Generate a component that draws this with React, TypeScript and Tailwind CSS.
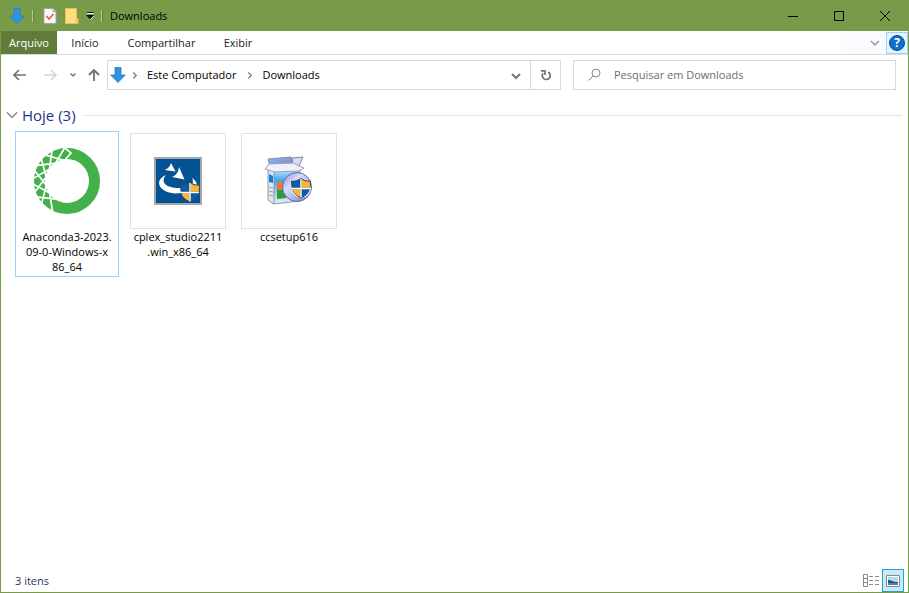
import React from "react";

function Arrow({ size }: { size: number }) {
  return (
    <svg width={size} height={size} viewBox="0 0 16 16" aria-hidden="true">
      <path d="M5 0.5h6v7.5h4.3L8 15.6 0.7 8H5z" fill="#2f93e2" stroke="#2a7fc4" strokeWidth="0.8" />
    </svg>
  );
}

function Shield({ x, y }: { x: number; y: number }) {
  return (
    <g transform={`translate(${x} ${y})`}>
      <path d="M10 0C7 2 3.500 2.800 0 2.800c0 8.500 2 14 10 17.700 8-3.700 10-9.200 10-17.700-3.500 0-7-.8-10-2.800z" fill="#3d474d" />
      <path d="M9.300 1.500v8.300H1.300C1 7.800 1 6 1 3.700c3 0 6-.7 8.300-2.200z" fill="#0a5cab" />
      <path d="M10.700 1.500c2.300 1.500 5.300 2.200 8.300 2.200 0 2.300 0 4.100-.3 6.100h-8z" fill="#fcb336" />
      <path d="M1.500 11.200h7.800v7.900c-4.500-2-6.900-4.500-7.800-7.900z" fill="#fcb336" />
      <path d="M10.700 11.200h7.800c-.9 3.400-3.300 5.900-7.800 7.900z" fill="#0a5cab" />
      <path d="M10 1v18.500M1 10.500h18" stroke="#fff" strokeWidth="1.400" />
    </g>
  );
}

function ringPoint(radius: number, degrees: number) {
  const angle = (degrees * Math.PI) / 180;
  return `${(34 + radius * Math.cos(angle)).toFixed(1)} ${(34 - radius * Math.sin(angle)).toFixed(1)}`;
}

const scaleStep = 23;
const lattice = [0, 1, 2, 3, 4, 5]
  .map((i) => {
    const from = 100 + i * scaleStep;
    const to = from + scaleStep + 8;
    return `M${ringPoint(35, from - 8)}L${ringPoint(20, to)}M${ringPoint(20, from - 8)}L${ringPoint(35, to)}`;
  })
  .join("");

function AnacondaIcon() {
  return (
    <svg width="68" height="68" viewBox="0 0 68 68" aria-hidden="true">
      <circle cx="34" cy="34" r="27.500" fill="none" stroke="#43b049" strokeWidth="11" />
      <path d={lattice} stroke="#fff" strokeWidth="1.700" fill="none" />
      <path d="M31 0l7 6-7 8" stroke="#fff" strokeWidth="1.700" fill="none" />
    </svg>
  );
}

function StudioIcon() {
  return (
    <svg width="48" height="48" viewBox="0 0 48 48" aria-hidden="true">
      <path d="M1 1h46v46H1z" fill="#035294" stroke="#a3a7ab" strokeWidth="2" />
      <path d="M17 6l4.500 8.500L10.500 13c3-1 5.500-3.500 6.500-7zM25 10l5.500 12.500L18 20c4-1.500 6.500-5 7-10z" fill="#fff" />
      <path d="M12 18C0 23 4 35 21 36.500l7-.5v-5C14 32 5 26 12 18zM38 21c6 4 6 8 2 12l-3-5c3-2 2-5 1-7z" fill="#fff" />
      <Shield x={26} y={25} />
    </svg>
  );
}

function SetupIcon() {
  return (
    <svg width="50" height="50" viewBox="0 0 50 50" aria-hidden="true">
      <defs>
        <linearGradient id="front" x1="0" y1="0" x2="0" y2="1">
          <stop offset="0" stopColor="#d6eefc" />
          <stop offset="0.350" stopColor="#3fa6f2" />
          <stop offset="1" stopColor="#e3f1fb" />
        </linearGradient>
        <linearGradient id="flap" x1="0" y1="0" x2="1" y2="1">
          <stop offset="0" stopColor="#86b4f2" />
          <stop offset="1" stopColor="#7f82cc" />
        </linearGradient>
        <linearGradient id="disc" x1="0" y1="0" x2="1" y2="1">
          <stop offset="0" stopColor="#7f84d8" />
          <stop offset="0.350" stopColor="#d9dbff" />
          <stop offset="1" stopColor="#7378c4" />
        </linearGradient>
      </defs>
      <path d="M4 3l23-2 2 9-22 4z" fill="url(#flap)" stroke="#858ba8" />
      <path d="M28 2l11-1-4 9-6-1z" fill="#d9dcee" stroke="#7d849c" />
      <path d="M9 14l27-2v33l-27 3z" fill="url(#front)" stroke="#8d99a6" />
      <path d="M4 11l6 4v33l-6-4z" fill="#e2e5ec" stroke="#8d99a6" />
      <path d="M1 13l4-5 24-1 11 5-5 3-24 1z" fill="#eef0fa" stroke="#9ba1b8" />
      <path d="M5 18l4 2v7l-4-1z" fill="#0c83d9" />
      <path d="M5 31l4 1M5 35l4 1M5 39l4 1" stroke="#9ca5b0" />
      <path d="M13 26l9-1v8l-9 1z" fill="#ef7735" />
      <path d="M13 34l9-1v9l-9 1z" fill="#2f9c2f" />
      <circle cx="33" cy="31" r="14.500" fill="url(#disc)" stroke="#6369a0" />
      <circle cx="37" cy="32" r="10" fill="#eceefb" />
      <Shield x={27} y={22} />
    </svg>
  );
}

const files = [
  { name: ["Anaconda3-2023.", "09-0-Windows-x", "86_64"], icon: <AnacondaIcon />, selected: true },
  { name: ["cplex_studio2211", ".win_x86_64"], icon: <StudioIcon />, selected: false },
  { name: ["ccsetup616"], icon: <SetupIcon />, selected: false },
];

function FileTile({ name, icon, selected }: (typeof files)[number]) {
  return (
    <button
      type="button"
      className={`flex w-[104px] flex-col items-center border pt-px pb-0.5 text-[11px] leading-[15px] ${selected ? "border-[#99d1ff]" : "border-transparent"}`}
    >
      <span className={`flex size-24 items-center justify-center border ${selected ? "border-transparent" : "border-[#e1e1e1]"}`}>
        {icon}
      </span>
      {name.map((line) => (
        <span key={line} className="block whitespace-nowrap">{line}</span>
      ))}
    </button>
  );
}

function Chevron({ d, size, color = "#777" }: { d: string; size: number; color?: string }) {
  return (
    <svg width={size} height={size} viewBox="0 0 12 12" fill="none" stroke={color} strokeWidth="1.500" aria-hidden="true">
      <path d={d} />
    </svg>
  );
}

export default function App() {
  return (
    <div className="flex min-h-screen flex-col border border-[#779b49] bg-white font-['Open_Sans','Noto_Sans',sans-serif] text-[11px] leading-4 text-black">
      <header className="flex h-[30px] items-center bg-[#779b49] pl-2">
        <Arrow size={16} />
        <span className="ml-[7px] h-3 w-0.5 border-r border-[#5f7c3a] bg-[#c0cfab]" />
        <button type="button" aria-label="Propriedades" className="ml-[9px]">
          <svg width="14" height="16" viewBox="0 0 14 16" fill="none">
            <path d="M1 .5h9l3 3v12H1z" fill="#f8f8fa" stroke="#a5a1ad" />
            <path d="M10 .5v3h3" stroke="#a5a1ad" />
            <path d="M3.500 8l2.500 3 4.500-5" stroke="#ec5d2c" strokeWidth="1.600" />
          </svg>
        </button>
        <button type="button" aria-label="Nova pasta" className="ml-2">
          <svg width="14" height="16" viewBox="0 0 14 16">
            <path d="M.5.5h11v10h1.500v5H.5z" fill="#ffdf80" stroke="#e9bd52" />
            <path d="M11.500 10v5" stroke="#e9bd52" />
          </svg>
        </button>
        <button type="button" aria-label="Personalizar" className="ml-[7px]">
          <svg width="8" height="8" viewBox="0 0 8 8">
            <path d="M1 .5h7" stroke="#111" />
            <path d="M1 1.500h7" stroke="#fff" />
            <path d="M0 3h8L4 7.500z" fill="#111" />
            <path d="M4 8l4-4" stroke="#fff" strokeWidth=".8" />
          </svg>
        </button>
        <span className="mx-[7px] h-3 w-0.5 border-r border-[#5f7c3a] bg-[#c0cfab]" />
        <h1>Downloads</h1>
        <div className="ml-auto flex h-full">
          <button type="button" aria-label="Minimizar" className="flex w-[46px] items-center justify-center">
            <svg width="10" height="10" stroke="#000"><path d="M0 5.500h10" /></svg>
          </button>
          <button type="button" aria-label="Maximizar" className="flex w-[46px] items-center justify-center">
            <svg width="10" height="10" fill="none" stroke="#000"><path d="M.5.5h9v9h-9z" /></svg>
          </button>
          <button type="button" aria-label="Fechar" className="flex w-[46px] items-center justify-center">
            <svg width="10" height="10" stroke="#000"><path d="M0 0l10 10M10 0L0 10" /></svg>
          </button>
        </div>
      </header>

      <nav className="flex h-6 items-stretch border-b border-[#dadbdc] text-[#222]">
        <button type="button" className="w-14 bg-[#5f7c3a] text-white">Arquivo</button>
        <button type="button" className="w-14">Início</button>
        <button type="button" className="w-[97px]">Compartilhar</button>
        <button type="button" className="w-14">Exibir</button>
        <div className="ml-auto flex items-center gap-[5px] bg-[#fafbfe] pl-7">
          <button type="button" aria-label="Expandir faixa"><Chevron d="M2 4l4 4 4-4" size={12} color="#999" /></button>
          <button type="button" aria-label="Ajuda" className="flex size-[22px] items-center justify-center border border-[#99d1ff] bg-[#e8f3fd]">
            <span className="flex size-4 items-center justify-center rounded-full border border-[#0a4e9e] bg-[#0d6fca] text-xs font-bold text-white">?</span>
          </button>
        </div>
      </nav>

      <div className="flex h-10 items-center px-3">
        <button type="button" aria-label="Voltar">
          <svg width="14" height="12" viewBox="0 0 14 12" fill="none" stroke="#707070" strokeWidth="1.600"><path d="M13 6H1.500M6 1L1 6l5 5" /></svg>
        </button>
        <button type="button" aria-label="Avançar" className="ml-4">
          <svg width="14" height="12" viewBox="0 0 14 12" fill="none" stroke="#d5d5d5" strokeWidth="1.600"><path d="M1 6h11.500M8 1l5 5-5 5" /></svg>
        </button>
        <button type="button" aria-label="Locais recentes" className="ml-3">
          <svg width="8" height="8" viewBox="0 0 8 8" fill="none" stroke="#777" strokeWidth="1.500"><path d="M1.500 2.500L4 5l2.500-2.500" /></svg>
        </button>
        <button type="button" aria-label="Acima" className="ml-[11px]">
          <svg width="12" height="14" viewBox="0 0 12 14" fill="none" stroke="#707070" strokeWidth="1.800"><path d="M6 13V2M1 7l5-5 5 5" /></svg>
        </button>
        <div className="ml-[7px] flex h-[30px] flex-1 items-center border border-[#d9d9d9] pl-0.5">
          <Arrow size={16} />
          <span className="ml-1"><Chevron d="M4 3l3.500 3.500L4 10" size={10} /></span>
          <a href="#computador" className="ml-[7px]">Este Computador</a>
          <span className="ml-[9px]"><Chevron d="M4 3l3.500 3.500L4 10" size={10} /></span>
          <a href="#downloads" className="ml-[7px]">Downloads</a>
          <button type="button" aria-label="Locais anteriores" className="ml-auto flex w-[29px] justify-center">
            <svg width="12" height="12" viewBox="0 0 12 12" fill="none" stroke="#777" strokeWidth="2"><path d="M2 5l4 4 4-4" /></svg>
          </button>
          <button type="button" aria-label="Atualizar" className="flex h-full w-[30px] items-center justify-center border-l border-[#d9d9d9]">
            <svg width="12" height="12" viewBox="0 0 12 12" fill="none" stroke="#707070" strokeWidth="1.700"><path d="M8.200 3A4 4 0 113 4.200M1 1.800h4V6" /></svg>
          </button>
        </div>
        <label className="ml-3 flex h-[30px] w-[323px] items-center border border-[#d9d9d9] pl-3.5">
          <svg width="13" height="14" viewBox="0 0 13 14" fill="none" stroke="#888"><circle cx="8" cy="5" r="4" /><path d="M5 8L.5 12.500" /></svg>
          <input type="search" aria-label="Pesquisar em Downloads" placeholder="Pesquisar em Downloads" className="ml-[13px] min-w-0 flex-1 outline-none placeholder:text-[#6d6d6d]" />
        </label>
      </div>

      <main className="flex-1 pt-2.5">
        <h2 className="flex items-center pr-1.5 pl-1 text-[15px] leading-5 text-[#1e3287]">
          <svg width="14" height="14" viewBox="0 0 14 14" fill="none" stroke="#777" strokeWidth="1.200" aria-hidden="true"><path d="M2 4.500l5 5 5-5" /></svg>
          <span className="ml-[3px]">Hoje (3)</span>
          <span className="ml-[7px] h-px flex-1 bg-[#e2e2e2]" />
        </h2>
        <div className="mt-1.5 flex items-start gap-[7px] pl-3.5">
          {files.map((f) => <FileTile key={f.name[0]} {...f} />)}
        </div>
      </main>

      <footer className="flex h-[23px] items-center pr-1 pl-3.5 text-[#1e395b]">
        <span>3 itens</span>
        <button type="button" aria-label="Detalhes" className="ml-auto flex w-[22px] justify-center">
          <svg width="16" height="14" viewBox="0 0 16 14" fill="none" stroke="#888">
            <path d="M.5.5h4v12h-4zM.5 4.500h4M.5 8.500h4M6 2.500h4M12 2.500h4M6 6.500h4M12 6.500h4M6 10.500h4M12 10.500h4" />
          </svg>
        </button>
        <button type="button" aria-label="Ícones grandes" className="flex h-full w-[22px] items-center justify-center border border-[#26a0da] bg-[#cbe8f6]">
          <svg width="14" height="12" viewBox="0 0 14 12">
            <path d="M.5.5h13v11H.5z" fill="#fff" stroke="#8b8b8b" />
            <path d="M2 2h10v8H2z" fill="#b4daf3" /><path d="M2 5c3 0 5 2 10 2v1H2z" fill="#275d61" /><path d="M2 8h10v2H2z" fill="#4d86bd" />
          </svg>
        </button>
      </footer>
    </div>
  );
}
